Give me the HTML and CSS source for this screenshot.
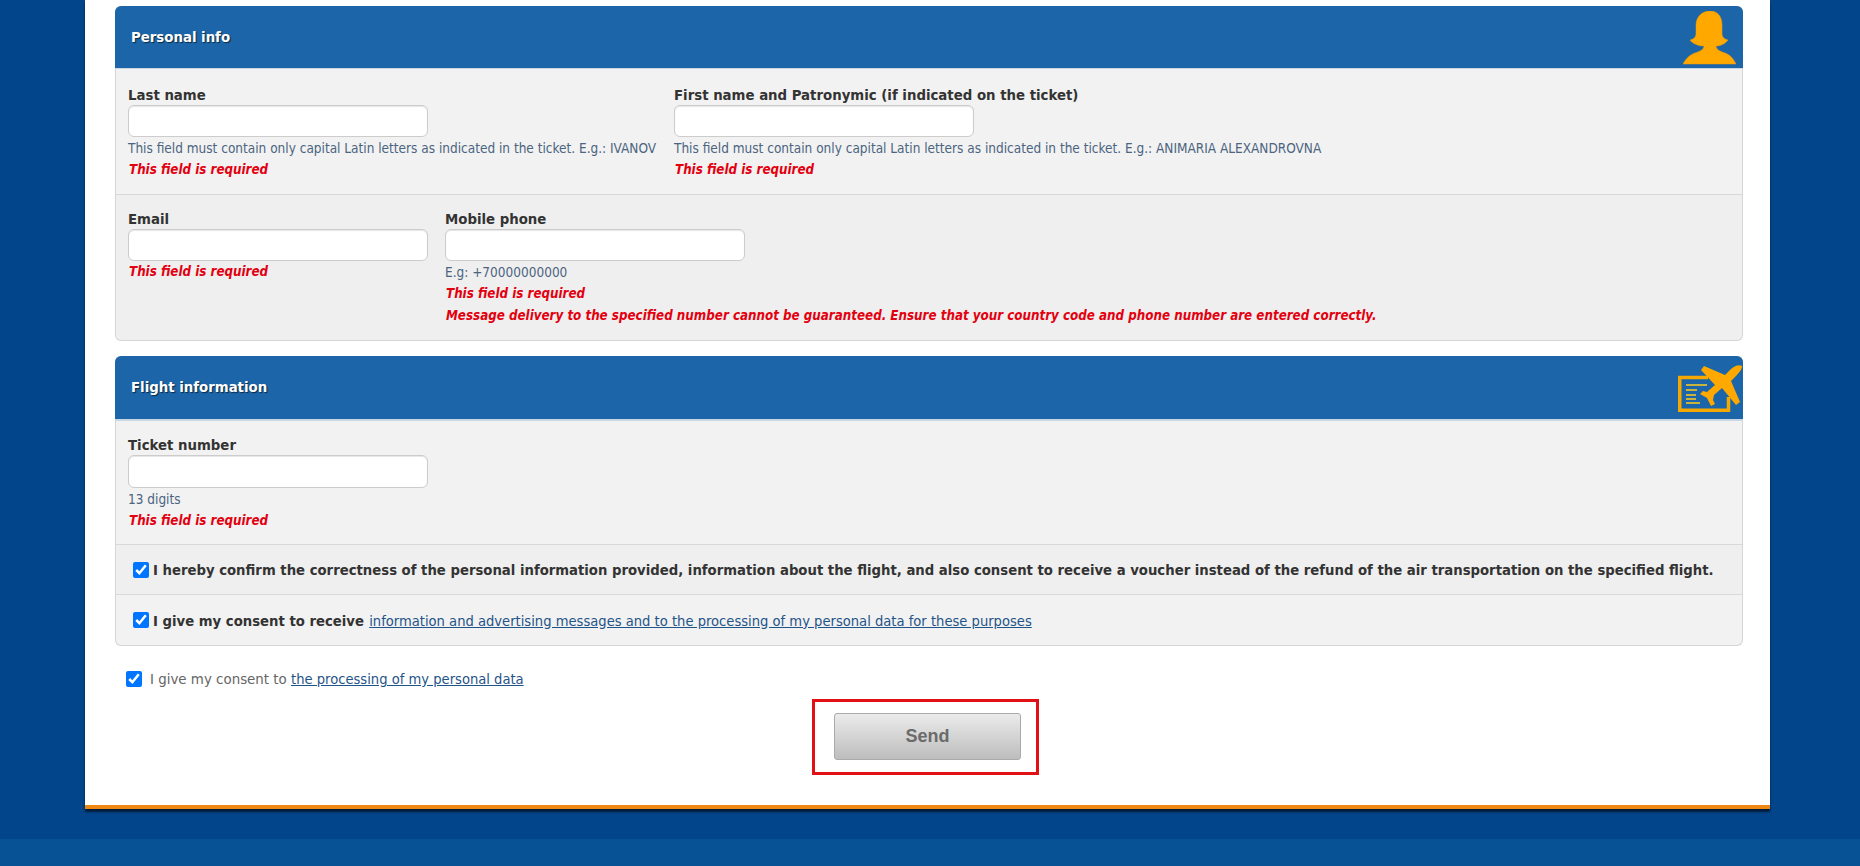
FILE: index.html
```html
<!DOCTYPE html>
<html lang="en">
<head>
    <meta charset="UTF-8">
    <meta name="viewport" content="width=device-width, initial-scale=1.0">
    <title>Voucher request</title>
    <link rel="stylesheet" href="styles.css">
</head>
<body>

    <div class="container">

        <div class="panel">
            <div class="panel-head">
                <h2>Personal info</h2>
                <svg class="icon-person" viewBox="0 0 53 54" width="53" height="54">
                    <path fill="#ffa800" stroke="#f09a00" stroke-width="0.5" d="M27 0C35 0 39 6 39 14V22C39 26 41 28 45 29C42 33 37 35 33 35C33 38 36 40 42 42C48 44 51 49 53 53H0C2 49 6 44 12 42C18 40 21 38 21 35C16 35 10 33 7 29C11 28 13 26 13 22V14C13 6 19 0 27 0Z"/>
                </svg>
            </div>
            <div class="row">
                <div class="field field-last">
                    <label>Last name</label>
                    <input type="text">
                    <p class="hint">This field must contain only capital Latin letters as indicated in the ticket. E.g.: IVANOV</p>
                    <p class="error">This field is required</p>
                </div>
                <div class="field">
                    <label>First name and Patronymic (if indicated on the ticket)</label>
                    <input type="text">
                    <p class="hint">This field must contain only capital Latin letters as indicated in the ticket. E.g.: ANIMARIA ALEXANDROVNA</p>
                    <p class="error">This field is required</p>
                </div>
            </div>
            <div class="row row-alt">
                <div class="field field-email">
                    <label>Email</label>
                    <input type="text">
                    <p class="error">This field is required</p>
                </div>
                <div class="field">
                    <label>Mobile phone</label>
                    <input type="text">
                    <p class="hint">E.g: +70000000000</p>
                    <p class="error">This field is required</p>
                    <p class="error">Message delivery to the specified number cannot be guaranteed. Ensure that your country code and phone number are entered correctly.</p>
                </div>
            </div>
        </div>

        <div class="panel panel-flight">
            <div class="panel-head">
                <h2>Flight information</h2>
                <svg class="icon-flight" viewBox="0 0 64 49" width="64" height="49">
                    <path fill="none" stroke="#f5a800" stroke-width="3.5" d="M30 13.5H1.75V46.25H50.5V33"/>
                    <path fill="none" stroke="#c9b33c" stroke-width="2" d="M8 21H29M8 26H19M8 31H18M8 35H18M8 39H22"/>
                    <path fill="#ffa800" d="M64 2C64 5 62 8 57 13L53 17L62 38L58 41L44 24L36 31L35 36L37 40L33 42L29 34L22 30L25 27L29 28L37 21L23 6L26 2L47 11L52 6C56 2 61 0 64 2Z"/>
                </svg>
            </div>
            <div class="row row-ticket">
                <div class="field">
                    <label>Ticket number</label>
                    <input type="text">
                    <p class="hint">13 digits</p>
                    <p class="error">This field is required</p>
                </div>
            </div>
            <div class="row-check row-alt">
                <input type="checkbox" checked>
                <span><b>I hereby confirm the correctness of the personal information provided, information about the flight, and also consent to receive a voucher instead of the refund of the air transportation on the specified flight.</b></span>
            </div>
            <div class="row-check">
                <input type="checkbox" checked>
                <span><b>I give my consent to receive</b> <a href="#">information and advertising messages and to the processing of my personal data for these purposes</a></span>
            </div>
        </div>

        <div class="consent">
            <input type="checkbox" checked>
            <span>I give my consent to <a href="#">the processing of my personal data</a></span>
        </div>

        <div class="send-box">
            <button class="send" type="button">Send</button>
        </div>
    </div>

    <div class="footer"></div>

</body>
</html>
```

FILE: styles.css
```css
body {
    margin: 0;
    background-color: #03458a;
    font-family: "DejaVu Sans Condensed", "DejaVu Sans", sans-serif;
    font-size: 13.5px;
    color: #333;
}
.container {
    width: 1685px;
    margin-left: 85px;
    padding: 6px 27px 30px 30px;
    box-sizing: border-box;
    background: #fff;
    border-bottom: 4px solid #ef8714;
    box-shadow: 0 3px 2px rgba(0,0,0,0.6);
}
.panel {
    border: 1px solid #d5d5d5;
    border-top: 0;
    border-radius: 6px;
    background: #f2f2f2;
}
.panel-flight {
    margin-top: 15px;
}
.panel-head {
    display: flex;
    justify-content: space-between;
    align-items: center;
    height: 62px;
    margin: 0 -1px;
    padding: 0 7px 0 16px;
    background: #1c65a8;
    border-bottom: 1px solid #c9d6e4;
    border-radius: 6px 6px 0 0;
}
.panel-flight .panel-head {
    height: 63px;
    border-bottom-width: 2px;
    padding-right: 1px;
}
.panel-head h2 {
    margin: 0 0 2px;
    font-size: 14.8px;
    font-weight: bold;
    color: #fff;
    text-shadow: 1px 1px 1px rgba(0,0,0,0.6);
}
.icon-person {
    margin-top: 2px;
}
.icon-flight {
    margin-top: 1px;
}
.row {
    display: flex;
    padding: 17px 12px 13px;
    border-bottom: 1px solid #d9d9d9;
}
.row-alt {
    background: #efefef;
}
.row.row-alt {
    padding-top: 15px;
    border-bottom: 0;
    border-radius: 0 0 6px 6px;
}
.row-ticket {
    padding-top: 15px;
    padding-bottom: 12px;
}
.row-ticket input[type="text"] {
    height: 33px;
}
.field-last {
    width: 546px;
}
.field-email {
    width: 317px;
}
label {
    display: block;
    height: 18px;
    margin-bottom: 1px;
    font-size: 14.8px;
    line-height: 18px;
    font-weight: bold;
}
input[type="text"] {
    display: block;
    width: 300px;
    height: 32px;
    box-sizing: border-box;
    border: 1px solid #ccc;
    border-radius: 6px;
    background: #fff;
    box-shadow: inset 0 1px 1px rgba(0,0,0,0.1);
}
p {
    margin: 0;
    line-height: 22px;
    white-space: nowrap;
}
.hint {
    color: #4b6480;
}
.error {
    padding-left: 1px;
    color: #e3000f;
    font-size: 13.25px;
    font-weight: bold;
    font-style: italic;
}
.row-check {
    display: flex;
    align-items: center;
    gap: 4px;
    height: 49px;
    padding-left: 17px;
    font-size: 14.72px;
    border-bottom: 1px solid #d9d9d9;
}
.row-check:last-child {
    height: 50px;
    border-bottom: 0;
    border-radius: 0 0 6px 6px;
}
.row-check span {
    white-space: nowrap;
}
.row-check a {
    margin-left: 1px;
}
input[type="checkbox"] {
    width: 16px;
    height: 16px;
    margin: 0;
}
a {
    color: #1f5488;
    font-size: 14.6px;
}
.consent {
    display: flex;
    align-items: center;
    gap: 8px;
    height: 20px;
    margin-top: 23px;
    padding-left: 11px;
    font-size: 14.9px;
    color: #666;
}
.send-box {
    width: 227px;
    margin: 10px 0 0 697px;
    padding: 11px 19px 12px;
    box-sizing: border-box;
    border: 3px solid #e01014;
}
.send {
    display: block;
    width: 187px;
    height: 47px;
    border: 1px solid #aaa;
    border-radius: 3px;
    background: linear-gradient(#ebebeb, #bdbdbd);
    font-family: "Liberation Sans", Arial, sans-serif;
    font-size: 18px;
    font-weight: bold;
    color: #6b6b6b;
}
.footer {
    height: 27px;
    margin-top: 30px;
    background: #075295;
}
```
